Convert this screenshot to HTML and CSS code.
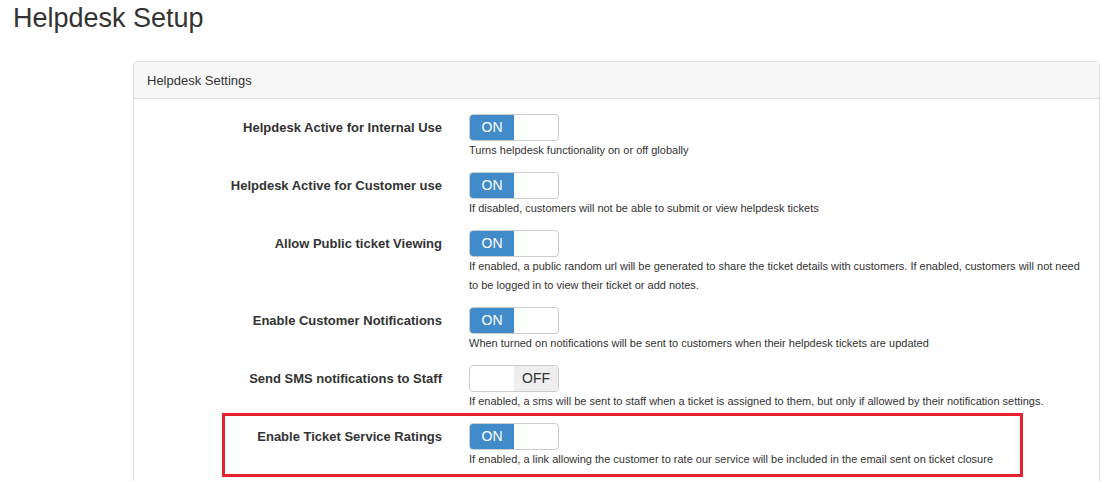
FILE: index.html
```html
<!DOCTYPE html>
<html lang="en">
<head>
  <meta charset="UTF-8">
  <title>Helpdesk Setup</title>
  <link rel="stylesheet" href="styles.css">
</head>
<body>

  <h1 class="page-title">Helpdesk Setup</h1>

  <div class="panel">
    <div class="panel-heading">Helpdesk Settings</div>
    <div class="panel-body">

      <div class="form-row">
        <label class="control-label">Helpdesk Active for Internal Use</label>
        <div class="control">
          <div class="switch on"><span class="switch-on">ON</span><span class="switch-off"></span></div>
          <p class="help">Turns helpdesk functionality on or off globally</p>
        </div>
      </div>

      <div class="form-row">
        <label class="control-label">Helpdesk Active for Customer use</label>
        <div class="control">
          <div class="switch on"><span class="switch-on">ON</span><span class="switch-off"></span></div>
          <p class="help">If disabled, customers will not be able to submit or view helpdesk tickets</p>
        </div>
      </div>

      <div class="form-row">
        <label class="control-label">Allow Public ticket Viewing</label>
        <div class="control">
          <div class="switch on"><span class="switch-on">ON</span><span class="switch-off"></span></div>
          <p class="help">If enabled, a public random url will be generated to share the ticket details with customers. If enabled, customers will not need to be logged in to view their ticket or add notes.</p>
        </div>
      </div>

      <div class="form-row">
        <label class="control-label">Enable Customer Notifications</label>
        <div class="control">
          <div class="switch on"><span class="switch-on">ON</span><span class="switch-off"></span></div>
          <p class="help">When turned on notifications will be sent to customers when their helpdesk tickets are updated</p>
        </div>
      </div>

      <div class="form-row">
        <label class="control-label">Send SMS notifications to Staff</label>
        <div class="control">
          <div class="switch off"><span class="switch-blank"></span><span class="switch-off">OFF</span></div>
          <p class="help">If enabled, a sms will be sent to staff when a ticket is assigned to them, but only if allowed by their notification settings.</p>
        </div>
      </div>

      <div class="form-row highlighted">
        <label class="control-label">Enable Ticket Service Ratings</label>
        <div class="control">
          <div class="switch on"><span class="switch-on">ON</span><span class="switch-off"></span></div>
          <p class="help">If enabled, a link allowing the customer to rate our service will be included in the email sent on ticket closure</p>
        </div>
      </div>

    </div>
  </div>

</body>
</html>
```

FILE: styles.css
```css
body {
  margin: 0;
  font-family: 'Liberation Sans', Arial, sans-serif;
  color: #333;
  background-color: #fff;
  overflow: hidden;
}

.page-title {
  font-size: 27px;
  font-weight: normal;
  line-height: 30px;
  margin: 0;
  padding: 3px 0 0 13px;
}

.panel {
  margin: 28px 2px 0 133px;
  border: 1px solid #ddd;
  border-radius: 4px 4px 0 0;
}

.panel-heading {
  background-color: #f7f7f7;
  border-bottom: 1px solid #ddd;
  padding: 11px 13px 9px;
  font-size: 13px;
  line-height: 16px;
}

.panel-body {
  padding: 15px 15px 20px 0;
}

.form-row {
  display: grid;
  grid-template-columns: 308px 1fr;
  column-gap: 27px;
  margin-bottom: 12px;
}

.control-label {
  font-size: 13px;
  font-weight: bold;
  line-height: 27px;
  text-align: right;
}

.switch {
  display: flex;
  width: 88px;
  height: 25px;
  border: 1px solid #ccc;
  border-radius: 4px;
  overflow: hidden;
  font-size: 14px;
  line-height: 25px;
}

.switch span {
  flex: 1;
  text-align: center;
}

.switch-on {
  background-color: #428bca;
  color: #fff;
}

.switch.off .switch-off {
  background-color: #eee;
  color: #333;
}

.help {
  margin: 0;
  font-size: 11px;
  line-height: 19px;
}

/* annotation box around the last setting */
.highlighted {
  position: relative;
}

.highlighted::after {
  content: '';
  position: absolute;
  left: 88px;
  top: -10px;
  width: 795px;
  height: 58px;
  border: 3px solid #e8222c;
  pointer-events: none;
}
```
